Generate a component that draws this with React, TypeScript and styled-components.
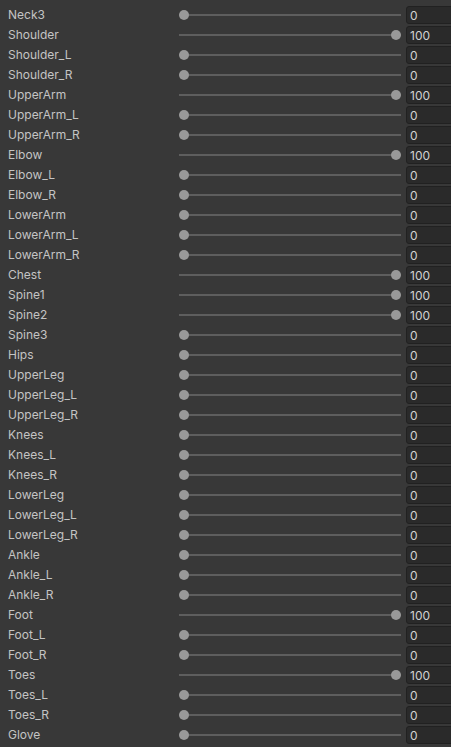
import React from "react";
import styled, { createGlobalStyle } from "styled-components";

const GlobalStyle = createGlobalStyle`
  html, body {
    margin: 0;
    padding: 0;
    background: #383838;
    overflow: hidden;
  }
`;

const bones: [string, number][] = [
  ["Neck3", 0],
  ["Shoulder", 100],
  ["Shoulder_L", 0],
  ["Shoulder_R", 0],
  ["UpperArm", 100],
  ["UpperArm_L", 0],
  ["UpperArm_R", 0],
  ["Elbow", 100],
  ["Elbow_L", 0],
  ["Elbow_R", 0],
  ["LowerArm", 0],
  ["LowerArm_L", 0],
  ["LowerArm_R", 0],
  ["Chest", 100],
  ["Spine1", 100],
  ["Spine2", 100],
  ["Spine3", 0],
  ["Hips", 0],
  ["UpperLeg", 0],
  ["UpperLeg_L", 0],
  ["UpperLeg_R", 0],
  ["Knees", 0],
  ["Knees_L", 0],
  ["Knees_R", 0],
  ["LowerLeg", 0],
  ["LowerLeg_L", 0],
  ["LowerLeg_R", 0],
  ["Ankle", 0],
  ["Ankle_L", 0],
  ["Ankle_R", 0],
  ["Foot", 100],
  ["Foot_L", 0],
  ["Foot_R", 0],
  ["Toes", 100],
  ["Toes_L", 0],
  ["Toes_R", 0],
  ["Glove", 0],
];

const Panel = styled.div`
  padding-top: 4px;
  width: 451px;
  overflow: hidden;
  font-family: Inter, "Noto Sans", sans-serif;
  font-size: 12px;
  color: #c4c4c4;
`;

const Row = styled.div`
  display: grid;
  grid-template-columns: 166px 222px 60px;
  column-gap: 5px;
  align-items: center;
  height: 20px;
  padding-left: 8px;
`;

const Label = styled.div`
  white-space: nowrap;
  line-height: 20px;
  padding-top: 1px;
`;

const Track = styled.div`
  position: relative;
  height: 20px;
  &::before {
    content: "";
    position: absolute;
    left: 0;
    right: 0;
    top: 9px;
    height: 2px;
    background: #5e5e5e;
  }
`;

const Thumb = styled.div<{ $pos: number }>`
  position: absolute;
  top: 5px;
  left: ${(p) => `calc(${p.$pos} * (100% - 10px))`};
  width: 10px;
  height: 10px;
  border-radius: 50%;
  background: #999999;
`;

const Field = styled.div`
  box-sizing: border-box;
  height: 18px;
  padding-left: 3px;
  padding-top: 1px;
  line-height: 15px;
  background: #2a2a2a;
  border: 1px solid #212121;
  border-radius: 3px;
  color: #d2d2d2;
`;

export default function App() {
  return (
    <>
      <GlobalStyle />
      <Panel>
        {bones.map(([name, value]) => (
          <Row key={name}>
            <Label>{name}</Label>
            <Track>
              <Thumb $pos={value / 100} />
            </Track>
            <Field>{value}</Field>
          </Row>
        ))}
      </Panel>
    </>
  );
}
